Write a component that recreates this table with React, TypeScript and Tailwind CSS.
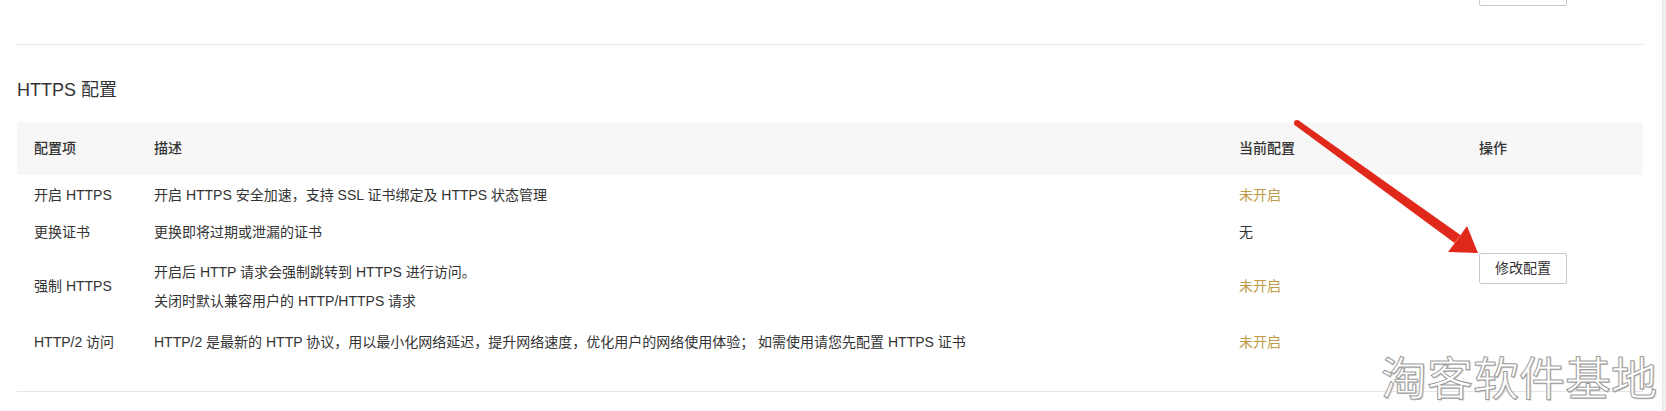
const font = "font-['Liberation_Sans','Noto_Sans_CJK_SC',sans-serif]";

interface Row {
  name: string;
  desc: string[];
  status: string;
  active: boolean;
  height: string;
}

const rows: Row[] = [
  {
    name: "开启 HTTPS",
    desc: ["开启 HTTPS 安全加速，支持 SSL 证书绑定及 HTTPS 状态管理"],
    status: "未开启",
    active: false,
    height: "h-[40px]",
  },
  {
    name: "更换证书",
    desc: ["更换即将过期或泄漏的证书"],
    status: "无",
    active: true,
    height: "h-[34px]",
  },
  {
    name: "强制 HTTPS",
    desc: ["开启后 HTTP 请求会强制跳转到 HTTPS 进行访问。", "关闭时默认兼容用户的 HTTP/HTTPS 请求"],
    status: "未开启",
    active: false,
    height: "h-[74px]",
  },
  {
    name: "HTTP/2 访问",
    desc: [
      "HTTP/2 是最新的 HTTP 协议，用以最小化网络延迟，提升网络速度，优化用户的网络使用体验； 如需使用请您先配置 HTTPS 证书",
    ],
    status: "未开启",
    active: false,
    height: "h-[38px]",
  },
];

const cols = "grid grid-cols-[120px_1085px_240px_1fr] pl-[17px]";

function Arrow() {
  return (
    <svg
      className="absolute left-0 top-0 pointer-events-none"
      width="1666"
      height="411"
      viewBox="0 0 1666 411"
    >
      <polygon
        fill="#e0291a"
        points="1295.3,125.4 1298.7,120.6 1460.4,234.9 1454.6,243.1"
      />
      <circle cx="1297" cy="123" r="3" fill="#e0291a" />
      <polygon fill="#e0291a" points="1448,252 1457,240 1467,226 1478,253" />
    </svg>
  );
}

export default function App() {
  return (
    <div className={`relative flex w-[1666px] h-[411px] overflow-hidden bg-white text-[#333] ${font}`}>
      <div className="w-[1662px] shrink-0">
        <div className="mx-[17px] w-[1626px]">
          {/* tail of the previous section */}
          <div className="h-[45px] border-b border-[#e4e4e8]">
            <div className={cols}>
              <div className="col-start-4">
                <div className="-mt-[25px] h-[31px] w-[88px] border border-[#c8c8c8] rounded-[2px] bg-white" />
              </div>
            </div>
          </div>

          <h2 className="mt-[32px] text-[18px] leading-[26px] font-normal">HTTPS 配置</h2>

          <div className="mt-[19px]">
            <div className={`${cols} h-[53px] items-center bg-[#f7f7f7] text-[14px] font-medium text-[#333]`}>
              <div>配置项</div>
              <div>描述</div>
              <div>当前配置</div>
              <div>操作</div>
            </div>

            <div className={`${cols} text-[14px] leading-[20px]`}>
              {rows.map((row, i) => (
                <div key={row.name} className="contents">
                  <div className={`${row.height} flex items-center`} style={{ gridRow: i + 1 }}>
                    {row.name}
                  </div>
                  <div
                    className={`${row.height} flex flex-col justify-center gap-[9px] whitespace-nowrap`}
                    style={{ gridRow: i + 1 }}
                  >
                    {row.desc.map((d) => (
                      <div key={d}>{d}</div>
                    ))}
                  </div>
                  <div
                    className={`${row.height} flex items-center ${row.active ? "text-[#333]" : "text-[#bf9a45]"}`}
                    style={{ gridRow: i + 1 }}
                  >
                    {row.status}
                  </div>
                </div>
              ))}
              <div className="col-start-4 row-start-1 row-span-4 flex items-center">
                <button className="h-[31px] w-[88px] border border-[#c8c8c8] rounded-[2px] bg-white text-[14px] text-[#333]">
                  修改配置
                </button>
              </div>
            </div>
          </div>

          <div className="mt-[30px] border-b border-[#e4e4ec]" />
        </div>
      </div>
      <div className="flex-1 bg-[#f0f0f0] border-l border-[#e6e6e6]" />

      <Arrow />

      <div className="absolute left-[1381px] top-[352px] text-[46px] leading-none text-white font-['Noto_Sans_CJK_SC',sans-serif] [-webkit-text-stroke:1px_#9c9c9c] [text-shadow:1px_1px_1px_#c4c4c4]">
        淘客软件基地
      </div>
    </div>
  );
}
